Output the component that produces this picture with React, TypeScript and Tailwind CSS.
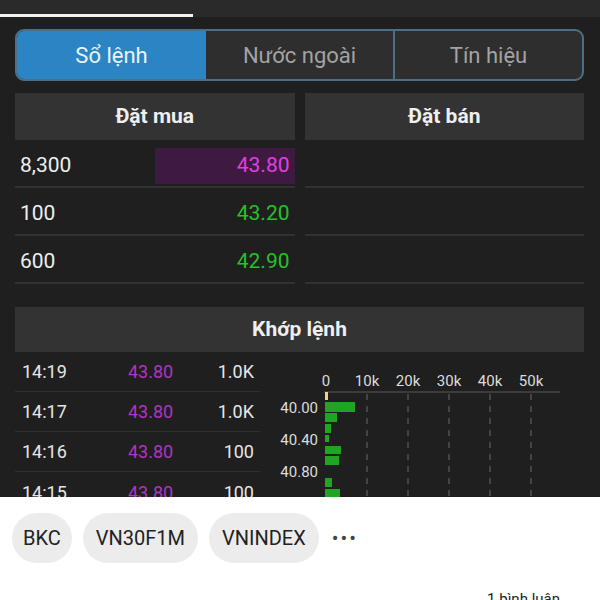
import React from "react";

const buyRows = [
  { vol: "8,300", price: "43.80", color: "text-[#e23fe0]", bar: true },
  { vol: "100", price: "43.20", color: "text-[#27c127]", bar: false },
  { vol: "600", price: "42.90", color: "text-[#27c127]", bar: false },
];

const matches = [
  { time: "14:19", price: "43.80", vol: "1.0K" },
  { time: "14:17", price: "43.80", vol: "1.0K" },
  { time: "14:16", price: "43.80", vol: "100" },
  { time: "14:15", price: "43.80", vol: "100" },
];

const bars = [
  { y: 50, h: 10, w: 30 },
  { y: 61, h: 9, w: 12 },
  { y: 72, h: 9, w: 6 },
  { y: 83, h: 7, w: 4 },
  { y: 94, h: 8, w: 16 },
  { y: 104, h: 9, w: 14 },
  { y: 126, h: 9, w: 7 },
  { y: 137, h: 9, w: 15 },
];

function VolumeChart() {
  const ticks = ["0", "10k", "20k", "30k", "40k", "50k"];
  return (
    <svg width="324" height="145" className="block">
      {ticks.map((t, i) => (
        <text key={t} x={66 + i * 41} y={34} fill="#dcdcdc" fontSize="15" textAnchor="middle" fontFamily="Roboto, sans-serif">
          {t}
        </text>
      ))}
      <line x1="64" y1="40" x2="300" y2="40" stroke="#5a5a5a" strokeWidth="1" />
      {[1, 2, 3, 4, 5].map((i) => (
        <line key={i} x1={66 + i * 41} y1="42" x2={66 + i * 41} y2="145" stroke="#6a6a6a" strokeWidth="1" strokeDasharray="6 6" />
      ))}
      {[["40.00", 61], ["40.40", 93], ["40.80", 125]].map(([l, y]) => (
        <text key={l} x="58" y={y} fill="#dcdcdc" fontSize="15" textAnchor="end" fontFamily="Roboto, sans-serif">
          {l}
        </text>
      ))}
      <rect x="65" y="40" width="3" height="8" fill="#f2d27a" />
      {bars.map((b, i) => (
        <rect key={i} x="65" y={b.y} width={b.w} height={b.h} fill="#1fa51f" />
      ))}
    </svg>
  );
}

export default function App() {
  return (
    <div className="w-[600px] h-[600px] overflow-hidden bg-white font-['Roboto',sans-serif]">
      <div className="h-[497px] bg-[#1f1f1f] overflow-hidden">
        <div className="h-[17px] bg-[#2a2a2a] flex items-end">
          <div className="w-[193px] h-[3px] bg-[#f2f2f2]" />
        </div>

        <div className="pl-[15px] pr-[16px] pt-[12px]">
          {/* tabs */}
          <div className="flex h-[52px] rounded-[9px] border-2 border-[#4d6f86] overflow-hidden bg-[#2e2e2e]">
            <div className="w-[189px] bg-[#2b85c4] flex items-center justify-center text-[22px] text-[#e8f4fb]">Sổ lệnh</div>
            <div className="flex-1 flex items-center justify-center text-[22px] text-[#a3a3a3] border-r-2 border-[#4d6f86]">Nước ngoài</div>
            <div className="flex-1 flex items-center justify-center text-[22px] text-[#a3a3a3]">Tín hiệu</div>
          </div>

          {/* order book */}
          <div className="mt-[12px] grid grid-cols-2 gap-[10px]">
            <div>
              <div className="h-[47px] bg-[#333333] flex items-center justify-center text-[21px] font-bold text-[#efefef]">Đặt mua</div>
              {buyRows.map((r) => (
                <div key={r.vol} className="h-[48px] pt-[5px] border-b-2 border-[#323232] flex items-center justify-between pl-[5px]">
                  <span className="text-[21px] text-[#eeeeee]">{r.vol}</span>
                  <span className={`w-[140px] h-[36px] flex items-center justify-end pr-[5px] text-[21px] ${r.color} ${r.bar ? "bg-[#3e1a40]" : ""}`}>
                    {r.price}
                  </span>
                </div>
              ))}
            </div>
            <div>
              <div className="h-[47px] bg-[#333333] flex items-center justify-center text-[21px] font-bold text-[#efefef]">Đặt bán</div>
              {buyRows.map((r) => (
                <div key={r.vol} className="h-[48px] border-b-2 border-[#323232]" />
              ))}
            </div>
          </div>

          {/* matches */}
          <div className="mt-[23px] h-[45px] bg-[#333333] flex items-center justify-center text-[21px] font-bold text-[#efefef]">Khớp lệnh</div>
          <div className="flex">
            <div className="w-[245px]">
              {matches.map((m, i) => (
                <div key={i} className={`h-[40px] flex items-center pl-[7px] pr-[6px] text-[18px] ${i < 3 ? "border-b border-[#303030]" : ""}`}>
                  <span className="w-[106px] text-[#e6e6e6]">{m.time}</span>
                  <span className="w-[70px] text-[#b234c2]">{m.price}</span>
                  <span className="flex-1 text-right text-[#e6e6e6]">{m.vol}</span>
                </div>
              ))}
            </div>
            <VolumeChart />
          </div>
        </div>
      </div>

      {/* bottom chips */}
      <div className="pl-[12px] pt-[16px] flex items-center gap-[11px]">
        <div className="h-[50px] px-[11px] rounded-full bg-[#ececec] flex items-center text-[20px] text-[#222]">BKC</div>
        <div className="h-[50px] px-[13px] rounded-full bg-[#ececec] flex items-center text-[20px] text-[#222]">VN30F1M</div>
        <div className="h-[50px] px-[13px] rounded-full bg-[#ececec] flex items-center text-[20px] text-[#222]">VNINDEX</div>
        <div className="ml-[2px] text-[20px] text-[#444] tracking-[2px] leading-none">•••</div>
      </div>
      <div className="mt-[25px] pr-[40px] text-right text-[15px] text-[#222]">1 bình luận</div>
    </div>
  );
}
